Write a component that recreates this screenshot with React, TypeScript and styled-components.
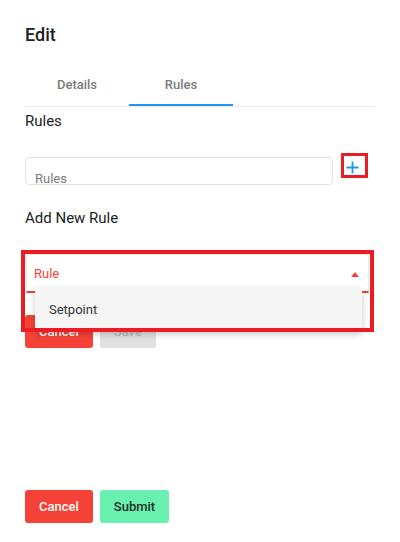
import React from "react";
import styled, { createGlobalStyle } from "styled-components";

const GlobalStyle = createGlobalStyle`
  html, body {
    margin: 0;
    padding: 0;
    background: #ffffff;
  }
  body {
    font-family: Roboto, "Liberation Sans", Arial, sans-serif;
    color: #212121;
  }
  * {
    box-sizing: border-box;
  }
`;

const Page = styled.div`
  display: flex;
  flex-direction: column;
  min-height: 542px;
  padding: 24px 25px 19px;
`;

const Title = styled.h1`
  margin: 0;
  font-size: 18px;
  line-height: 22px;
  font-weight: 500;
  color: #212121;
`;

const TabBar = styled.div`
  display: flex;
  height: 45px;
  margin-top: 16px;
  border-bottom: 1px solid #ebebeb;
`;

const Tab = styled.div<{ $active?: boolean }>`
  position: relative;
  width: 104px;
  height: 44px;
  display: flex;
  align-items: center;
  justify-content: center;
  font-size: 13px;
  font-weight: 500;
  color: #7b7b7b;
  &::after {
    content: "";
    display: ${(p) => (p.$active ? "block" : "none")};
    position: absolute;
    left: 0;
    right: 0;
    bottom: 0;
    height: 2px;
    background: #2196f3;
  }
`;

const SectionTitle = styled.div<{ $top: number }>`
  margin-top: ${(p) => p.$top}px;
  font-size: 15px;
  line-height: 20px;
  color: #212121;
`;

const InputRow = styled.div`
  display: flex;
  align-items: flex-start;
  margin-top: 25px;
`;

const RulesInput = styled.div`
  flex: 1;
  height: 28px;
  margin-top: 1px;
  padding: 13px 9px 0;
  border: 1px solid #e2e2e2;
  border-radius: 4px;
  overflow: hidden;
  font-size: 13px;
  line-height: 15px;
  color: #7a7a7a;
`;

const AddButton = styled.button`
  width: 21px;
  height: 19px;
  margin: 0 10px 0 11px;
  padding: 5px 0 0 2px;
  display: flex;
  align-items: flex-start;
  border: none;
  background: #ffffff;
  outline: 3px solid #ec1c24;
  cursor: pointer;
`;

const SelectWrap = styled.div`
  position: relative;
  margin: 26px 6px 0 1px;
`;

const SelectField = styled.div`
  height: 39px;
  display: flex;
  align-items: center;
  justify-content: space-between;
  padding: 0 9px 0 7px;
  background: #ffffff;
  border: 1px solid #e8e8e8;
  border-bottom: 2px solid #f44336;
  border-radius: 4px 4px 0 0;
  font-size: 13px;
  color: #f44336;
`;

const Arrow = styled.span`
  width: 0;
  height: 0;
  margin-top: 2px;
  border-left: 4.5px solid transparent;
  border-right: 4.5px solid transparent;
  border-bottom: 5px solid #f44336;
`;

const Menu = styled.div`
  position: absolute;
  z-index: 2;
  top: 33px;
  left: 9px;
  right: 7px;
  height: 44px;
  display: flex;
  align-items: center;
  padding-left: 14px;
  background: #f5f5f5;
  border-radius: 3px;
  box-shadow: 0 3px 7px rgba(0, 0, 0, 0.22);
  font-size: 13px;
  color: #333333;
`;

const Highlight = styled.div`
  position: absolute;
  z-index: 3;
  top: -4px;
  left: -5px;
  right: -5px;
  height: 82px;
  border: 4px solid #ec1c24;
  pointer-events: none;
`;

const ButtonRow = styled.div<{ $top?: number }>`
  display: flex;
  gap: 7px;
  margin-top: ${(p) => (p.$top ? `${p.$top}px` : "auto")};
`;

const Button = styled.button<{ $bg: string; $fg: string }>`
  height: 33px;
  padding: 0 14px;
  border: none;
  border-radius: 3px;
  background: ${(p) => p.$bg};
  color: ${(p) => p.$fg};
  font-family: inherit;
  font-size: 13px;
  font-weight: 500;
  cursor: pointer;
`;

function PlusIcon() {
  return (
    <svg width="13" height="13" viewBox="0 0 13 13">
      <path d="M6.5 0.5v12M0.5 6.5h12" stroke="#2196f3" strokeWidth="1.8" fill="none" />
    </svg>
  );
}

function App() {
  return (
    <>
      <GlobalStyle />
      <Page>
        <Title>Edit</Title>
        <TabBar>
          <Tab>Details</Tab>
          <Tab $active>Rules</Tab>
        </TabBar>
        <SectionTitle $top={4}>Rules</SectionTitle>
        <InputRow>
          <RulesInput>Rules</RulesInput>
          <AddButton aria-label="Add rule">
            <PlusIcon />
          </AddButton>
        </InputRow>
        <SectionTitle $top={23}>Add New Rule</SectionTitle>
        <SelectWrap>
          <SelectField>
            <span>Rule</span>
            <Arrow />
          </SelectField>
          <Menu>Setpoint</Menu>
          <Highlight />
        </SelectWrap>
        <ButtonRow $top={22}>
          <Button $bg="#f44336" $fg="#ffffff">Cancel</Button>
          <Button $bg="#e0e0e0" $fg="#bdbdbd">Save</Button>
        </ButtonRow>
        <ButtonRow>
          <Button $bg="#f44336" $fg="#ffffff">Cancel</Button>
          <Button $bg="#69f0ae" $fg="#1e2d25">Submit</Button>
        </ButtonRow>
      </Page>
    </>
  );
}

export default App;
